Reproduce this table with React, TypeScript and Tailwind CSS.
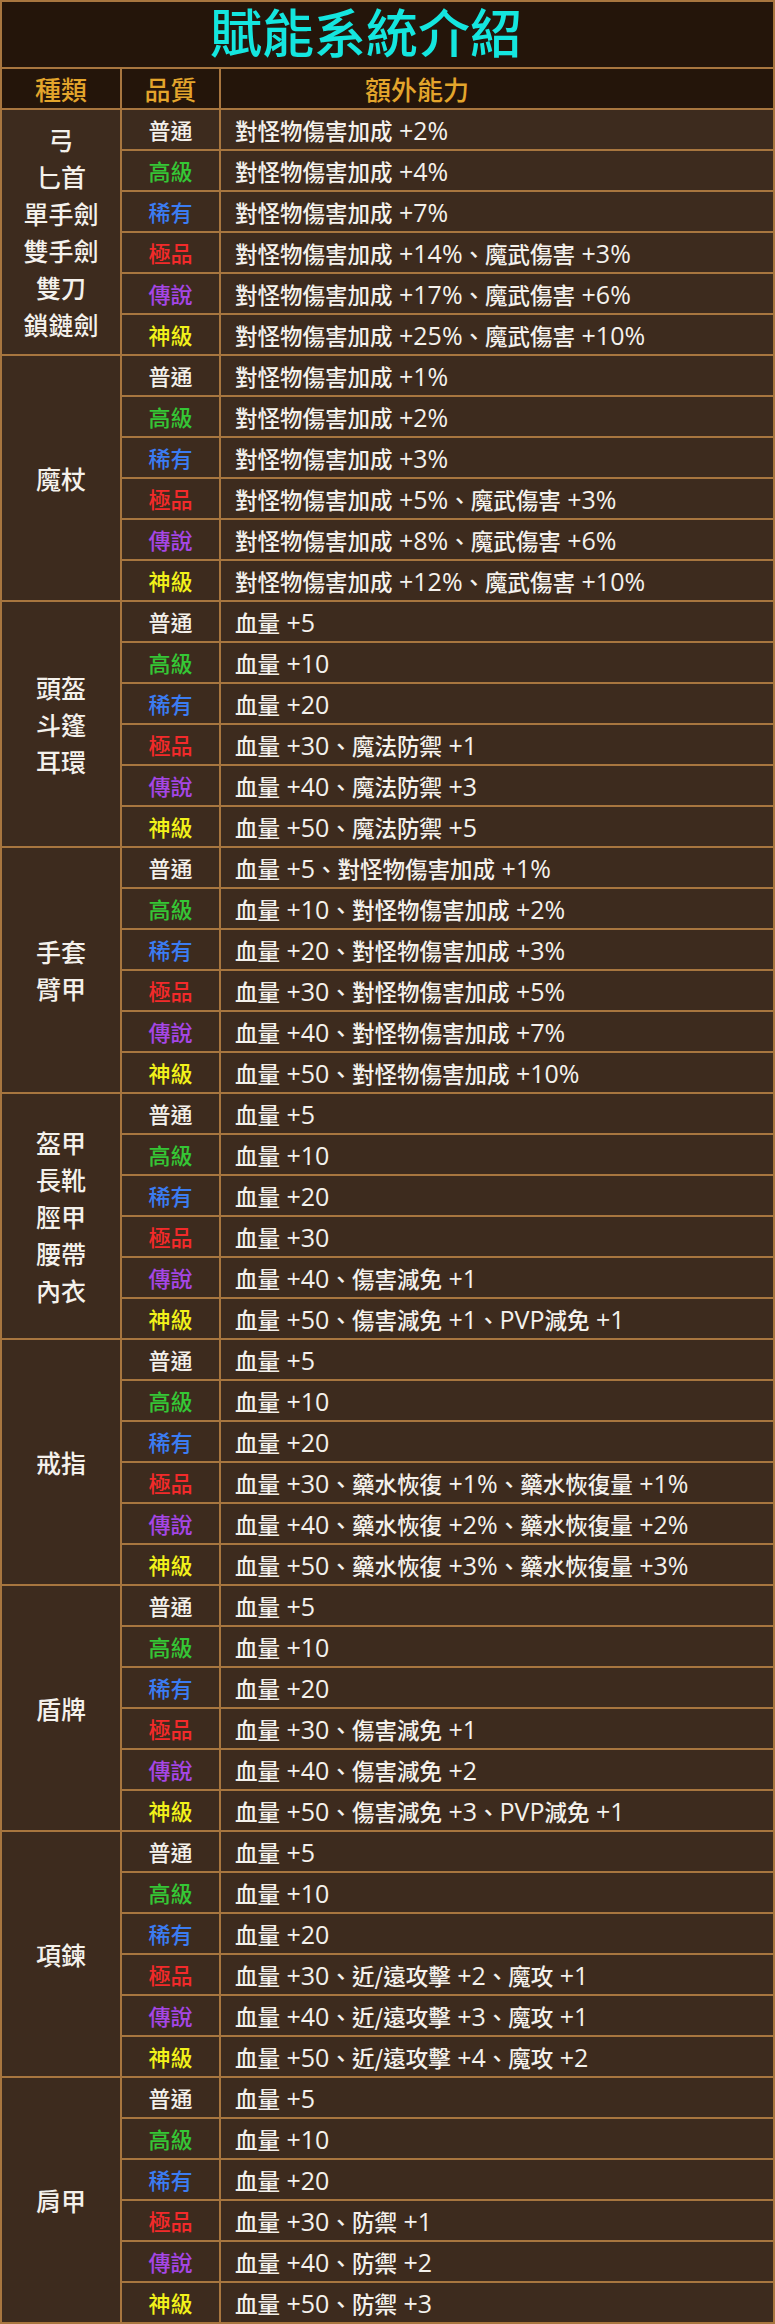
import React from "react";

const QUALITIES: { name: string; color: string }[] = [
  { name: "普通", color: "text-[#f4f1ec]" },
  { name: "高級", color: "text-[#35c635]" },
  { name: "稀有", color: "text-[#3b7cf2]" },
  { name: "極品", color: "text-[#f22a2a]" },
  { name: "傳說", color: "text-[#a546e6]" },
  { name: "神級", color: "text-[#f2f21a]" },
];

const GROUPS: { cats: string[]; effects: string[] }[] = [
  {
    cats: ["弓", "匕首", "單手劍", "雙手劍", "雙刀", "鎖鏈劍"],
    effects: [
      "對怪物傷害加成 +2%",
      "對怪物傷害加成 +4%",
      "對怪物傷害加成 +7%",
      "對怪物傷害加成 +14%、魔武傷害 +3%",
      "對怪物傷害加成 +17%、魔武傷害 +6%",
      "對怪物傷害加成 +25%、魔武傷害 +10%",
    ],
  },
  {
    cats: ["魔杖"],
    effects: [
      "對怪物傷害加成 +1%",
      "對怪物傷害加成 +2%",
      "對怪物傷害加成 +3%",
      "對怪物傷害加成 +5%、魔武傷害 +3%",
      "對怪物傷害加成 +8%、魔武傷害 +6%",
      "對怪物傷害加成 +12%、魔武傷害 +10%",
    ],
  },
  {
    cats: ["頭盔", "斗篷", "耳環"],
    effects: [
      "血量 +5",
      "血量 +10",
      "血量 +20",
      "血量 +30、魔法防禦 +1",
      "血量 +40、魔法防禦 +3",
      "血量 +50、魔法防禦 +5",
    ],
  },
  {
    cats: ["手套", "臂甲"],
    effects: [
      "血量 +5、對怪物傷害加成 +1%",
      "血量 +10、對怪物傷害加成 +2%",
      "血量 +20、對怪物傷害加成 +3%",
      "血量 +30、對怪物傷害加成 +5%",
      "血量 +40、對怪物傷害加成 +7%",
      "血量 +50、對怪物傷害加成 +10%",
    ],
  },
  {
    cats: ["盔甲", "長靴", "脛甲", "腰帶", "內衣"],
    effects: [
      "血量 +5",
      "血量 +10",
      "血量 +20",
      "血量 +30",
      "血量 +40、傷害減免 +1",
      "血量 +50、傷害減免 +1、PVP減免 +1",
    ],
  },
  {
    cats: ["戒指"],
    effects: [
      "血量 +5",
      "血量 +10",
      "血量 +20",
      "血量 +30、藥水恢復 +1%、藥水恢復量 +1%",
      "血量 +40、藥水恢復 +2%、藥水恢復量 +2%",
      "血量 +50、藥水恢復 +3%、藥水恢復量 +3%",
    ],
  },
  {
    cats: ["盾牌"],
    effects: [
      "血量 +5",
      "血量 +10",
      "血量 +20",
      "血量 +30、傷害減免 +1",
      "血量 +40、傷害減免 +2",
      "血量 +50、傷害減免 +3、PVP減免 +1",
    ],
  },
  {
    cats: ["項鍊"],
    effects: [
      "血量 +5",
      "血量 +10",
      "血量 +20",
      "血量 +30、近/遠攻擊 +2、魔攻 +1",
      "血量 +40、近/遠攻擊 +3、魔攻 +1",
      "血量 +50、近/遠攻擊 +4、魔攻 +2",
    ],
  },
  {
    cats: ["肩甲"],
    effects: [
      "血量 +5",
      "血量 +10",
      "血量 +20",
      "血量 +30、防禦 +1",
      "血量 +40、防禦 +2",
      "血量 +50、防禦 +3",
    ],
  },
];

function Effect({ text }: { text: string }) {
  const parts = text.split(/([ +0-9%A-Z]+)/).filter((p) => p.length > 0);
  return (
    <>
      {parts.map((p, i) =>
        /^[ +0-9%A-Z]+$/.test(p) ? (
          <span
            key={i}
            className="text-[25px]"
            style={{ fontFamily: '"Open Sans", "Noto Sans", sans-serif' }}
          >
            {p}
          </span>
        ) : (
          <span key={i}>{p}</span>
        )
      )}
    </>
  );
}

export default function App() {
  return (
    <div
      className="w-[775px] bg-[#3d2b1e] border-2 border-[#a8763f] text-[#f4f1ec] font-medium"
      style={{ fontFamily: '"Noto Sans CJK TC", "Noto Sans", sans-serif' }}
    >
      <div className="h-[65px] bg-[#24150a] flex items-center pl-[208px] pb-[8px]">
        <h1 className="text-[52px] leading-[57px] text-[#14e6df] font-medium">
          賦能系統介紹
        </h1>
      </div>
      <div className="flex h-[41px] bg-[#24150a] border-t-2 border-[#a8763f] text-[26px] text-[#e3a52c]">
        <div className="w-[120px] border-r-2 border-[#a8763f] flex items-center justify-center">
          種類
        </div>
        <div className="w-[99px] border-r-2 border-[#a8763f] flex items-center justify-center">
          品質
        </div>
        <div className="flex-1 flex items-center pl-[144px]">額外能力</div>
      </div>
      {GROUPS.map((g, gi) => (
        <div key={gi} className="flex border-t-2 border-[#a8763f]">
          <div className="w-[120px] border-r-2 border-[#a8763f] flex flex-col items-center justify-center text-[25px] leading-[37px]">
            {g.cats.map((c) => (
              <div key={c}>{c}</div>
            ))}
          </div>
          <div className="flex-1 flex flex-col">
            {g.effects.map((e, i) => (
              <div
                key={i}
                className={`flex ${i === 0 ? "h-[39px]" : "h-[41px] border-t-2 border-[#a8763f]"}`}
              >
                <div
                  className={`w-[99px] border-r-2 border-[#a8763f] flex items-center justify-center text-[22px] ${QUALITIES[i].color}`}
                >
                  {QUALITIES[i].name}
                </div>
                <div className="flex-1 flex items-center pl-[14px] text-[22.5px] leading-[30px] whitespace-pre">
                  <div>
                    <Effect text={e} />
                  </div>
                </div>
              </div>
            ))}
          </div>
        </div>
      ))}
    </div>
  );
}
